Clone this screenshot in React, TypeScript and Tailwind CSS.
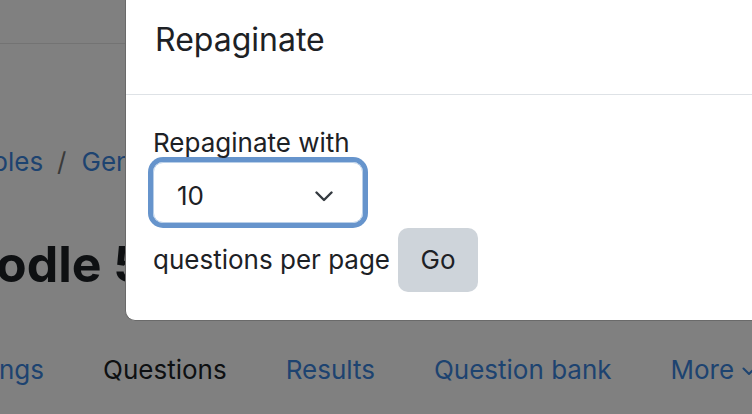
const tabs = [
  { label: 'ngs', active: false },
  { label: 'Questions', active: true },
  { label: 'Results', active: false },
  { label: 'Question bank', active: false },
];

function PageBehind() {
  return (
    <div className="text-[26px] leading-[36px]">
      <div className="h-[44px] border-b border-[#737373]" />
      <div className="mt-[100px] flex whitespace-nowrap text-[#1d4370]">
        <span className="ml-[-8px]">ples</span>
        <span className="ml-[14px] mr-[15px] text-[#3a3a3a]">/</span>
        <span>Gen</span>
      </div>
      <h1 className="ml-[-4px] mt-[55px] whitespace-nowrap text-[50px] leading-[58px] font-bold text-[#0e1012]">
        odle 5
      </h1>
      <nav className="ml-[-1px] mt-[59px] flex items-center gap-[59px] whitespace-nowrap">
        {tabs.map((tab) => (
          <span key={tab.label} className={tab.active ? 'text-[#0e1012]' : 'text-[#1d4370]'}>
            {tab.label}
          </span>
        ))}
        <span className="flex items-center gap-[8px] text-[#1d4370]">
          More
          <svg width="14" height="9" viewBox="0 0 14 9" fill="none" className="mt-[2px]">
            <path d="M1.5 1.5 L7 7 L12.5 1.5" stroke="#1d4370" strokeWidth="2" strokeLinecap="round" strokeLinejoin="round" />
          </svg>
        </span>
      </nav>
    </div>
  );
}

export default function App() {
  return (
    <div className="relative h-[414px] w-[752px] overflow-hidden bg-[#808080] font-['Inter',sans-serif]">
      <PageBehind />

      <div className="absolute left-[125px] top-0 w-[660px] rounded-bl-[10px] border-b border-l border-[#6a6a6a] bg-white text-[#1d2125]">
        <div className="h-[95px] border-b border-[#dee2e6] pl-[29px] pt-[21px]">
          <h5 className="text-[32px] leading-[38px] font-normal">Repaginate</h5>
        </div>

        <div className="px-[27px] pb-[28px] pt-[30px] text-[26px] leading-[36px]">
          <label className="mb-[1px] block">Repaginate with</label>
          <div className="flex h-[61px] w-[210px] items-center justify-between rounded-[10px] border border-[#b9cfe8] pl-[23px] pr-[29px] pt-[7px] shadow-[0_0_0_5px_#6694cc]">
            <span>10</span>
            <svg width="18" height="11" viewBox="0 0 18 11" fill="none">
              <path d="M1.5 1.5 L9 9 L16.5 1.5" stroke="#343a40" strokeWidth="2.4" strokeLinecap="round" strokeLinejoin="round" />
            </svg>
          </div>
          <div className="mt-[5px] flex items-baseline gap-[8px]">
            <span>questions per page</span>
            <button className="h-[64px] w-[80px] rounded-[10px] bg-[#ced4da] text-[#1d2125]">Go</button>
          </div>
        </div>
      </div>
    </div>
  );
}
